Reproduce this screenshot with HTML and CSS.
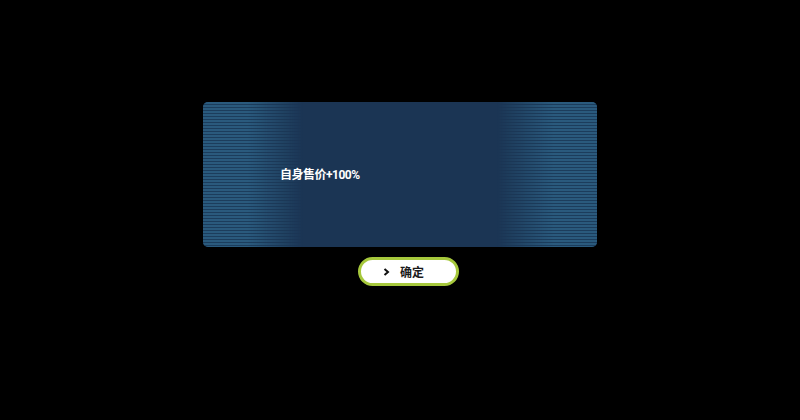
FILE: index.html
```html
<!DOCTYPE html>
<html lang="zh">
<head>
    <meta charset="UTF-8">
    <meta name="viewport" content="width=device-width, initial-scale=1.0">
    <title>效果</title>
    <link rel="stylesheet" href="styles.css">
</head>
<body>
    <div class="screen">
        <div class="panel">
            <div class="panel-text">自身售价+100%</div>
        </div>
        <button class="confirm-button">
            <svg width="7" height="8" viewBox="0 0 7 8">
                <path d="M1.5 1 L5 4 L1.5 7" fill="none" stroke="#111" stroke-width="2"/>
            </svg>
            确定
        </button>
    </div>
</body>
</html>
```

FILE: styles.css
```css
body {
    margin: 0;
    padding: 0;
    background-color: #000;
    font-family: Roboto, "Noto Sans CJK SC", sans-serif;
}

.screen {
    height: 420px;
    padding-top: 102px;
    box-sizing: border-box;
    display: flex;
    flex-direction: column;
    align-items: center;
}

.panel {
    position: relative;
    width: 394px;
    height: 145px;
    background-color: #1b3554;
    border-radius: 5px;
    overflow: hidden;
    display: flex;
    align-items: center;
    padding-left: 77px;
    box-sizing: border-box;
}

/* scanlines along both sides, fading out toward the middle */
.panel::before {
    content: "";
    position: absolute;
    inset: 0;
    background: repeating-linear-gradient(to bottom, #2a5a7d 0 2px, #1c3d5c 2px 3px);
    -webkit-mask-image: linear-gradient(to right, #000 0, #000 45px, transparent 100px, transparent 294px, #000 350px, #000 100%);
    mask-image: linear-gradient(to right, #000 0, #000 45px, transparent 100px, transparent 294px, #000 350px, #000 100%);
}

.panel-text {
    position: relative;
    color: #fff;
    font-size: 12px;
    font-weight: bold;
    letter-spacing: -0.5px;
    margin-top: -3px;
}

.confirm-button {
    margin-top: 10px;
    margin-left: 17px;
    width: 101px;
    height: 29px;
    background-color: #fff;
    border: 3px solid #a6c83c;
    border-radius: 15px;
    display: flex;
    align-items: center;
    justify-content: center;
    gap: 10px;
    padding: 0 10px 0 0;
    font-family: "Noto Sans CJK SC", sans-serif;
    font-size: 12px;
    font-weight: bold;
    color: #1a1a1a;
    cursor: pointer;
}
```
